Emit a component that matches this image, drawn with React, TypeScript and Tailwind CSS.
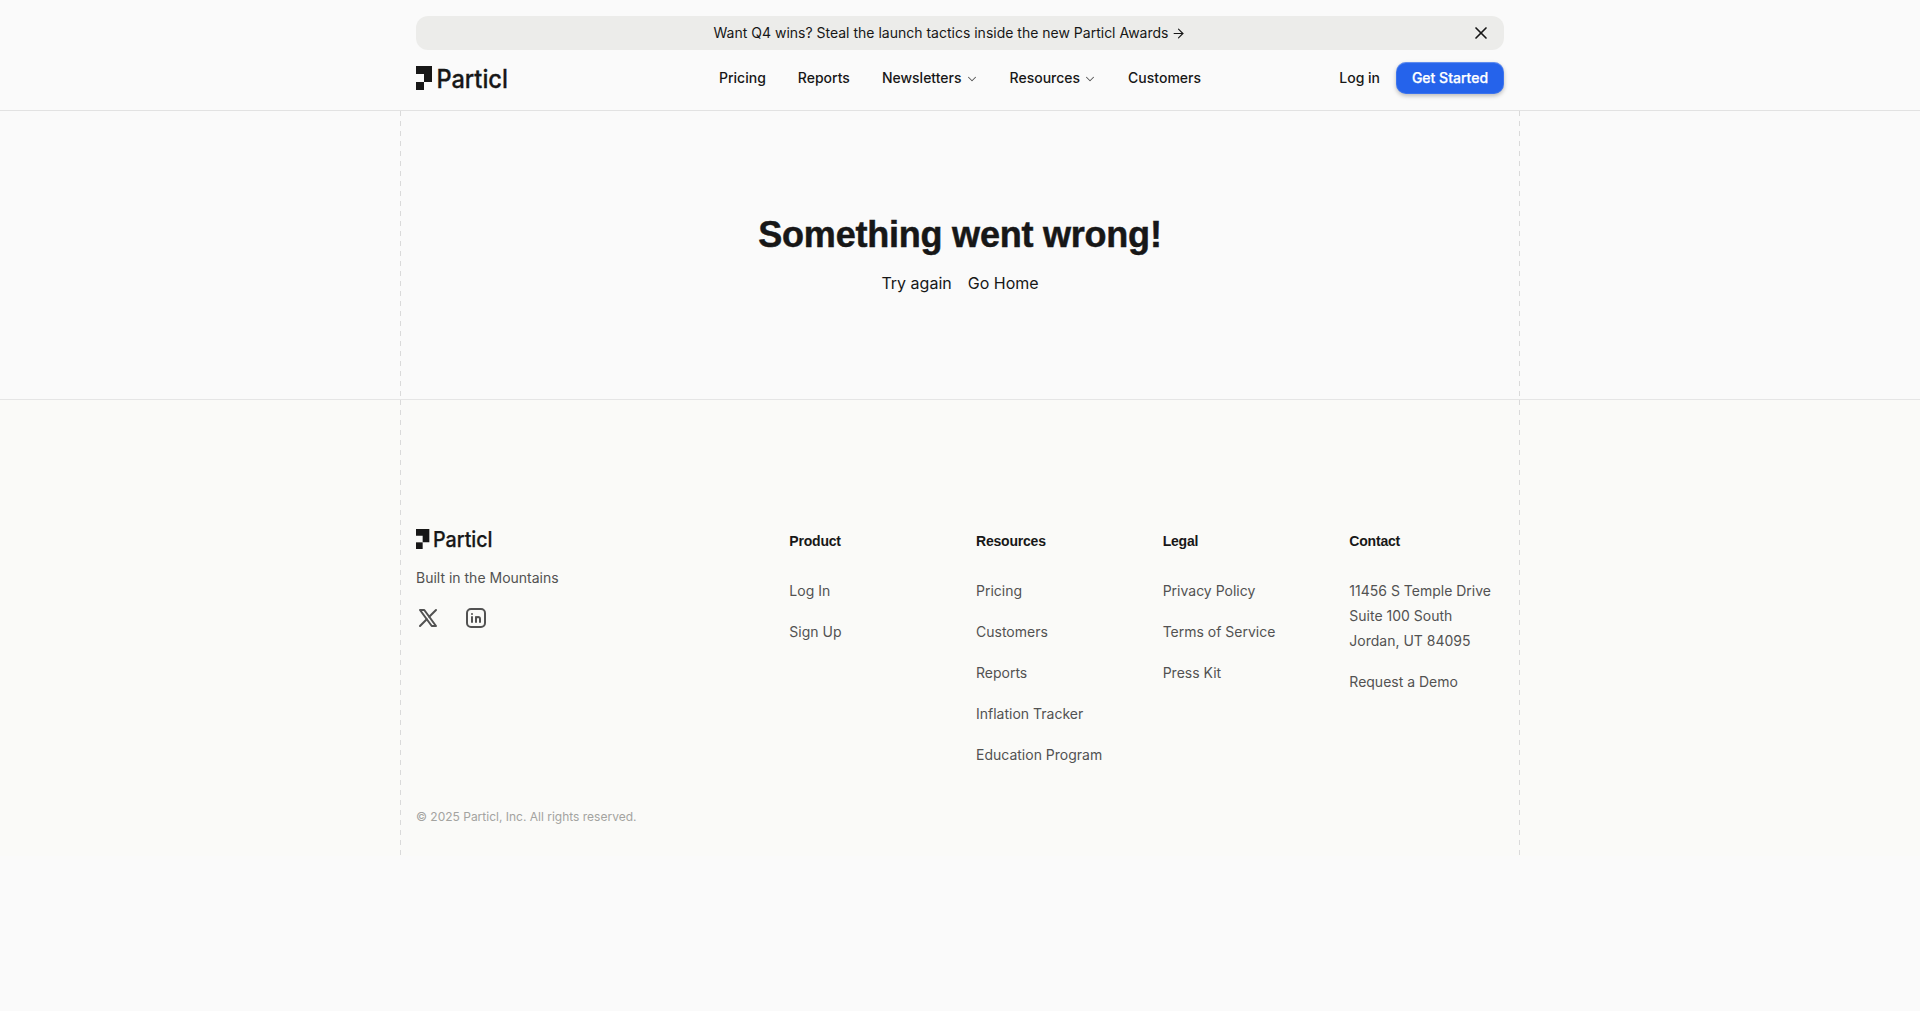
import React from "react";
import { ArrowRight, ChevronDown, X } from "lucide-react";

const navLinks = [
  { label: "Pricing" },
  { label: "Reports" },
  { label: "Newsletters", menu: true },
  { label: "Resources", menu: true },
  { label: "Customers" },
];

const footerColumns = [
  { title: "Product", links: ["Log In", "Sign Up"] },
  {
    title: "Resources",
    links: [
      "Pricing",
      "Customers",
      "Reports",
      "Inflation Tracker",
      "Education Program",
    ],
  },
  { title: "Legal", links: ["Privacy Policy", "Terms of Service", "Press Kit"] },
];

const Logo = ({ className }: { className?: string }) => (
  <svg
    viewBox="0 0 96 24"
    fill="#171717"
    overflow="visible"
    className={className}
  >
    <path d="M0 0h16v16H8V8H0z" />
    <path d="M0 16h8v8H0z" />
    <text
      x="20.4"
      y="21.8"
      fontSize="25"
      fontWeight="500"
      textLength="71.5"
      lengthAdjust="spacingAndGlyphs"
      stroke="#171717"
      strokeWidth="0.3"
      className="font-['Inter',sans-serif]"
    >
      Particl
    </text>
  </svg>
);

const iconProps = {
  width: 24,
  height: 24,
  viewBox: "0 0 24 24",
  fill: "none",
  stroke: "currentColor",
  strokeWidth: 2,
  strokeLinecap: "round" as const,
  strokeLinejoin: "round" as const,
};

const XLogo = () => (
  <svg {...iconProps}>
    <path d="M4 4l11.733 16h4.267l-11.733 -16z" />
    <path d="M4 20l6.768 -6.768m2.46 -2.46l6.772 -6.772" />
  </svg>
);

const LinkedinLogo = () => (
  <svg {...iconProps}>
    <path d="M8 11v5" />
    <path d="M8 8v.01" />
    <path d="M12 16v-5" />
    <path d="M16 16v-3a2 2 0 1 0 -4 0" />
    <path d="M3 7a4 4 0 0 1 4 -4h10a4 4 0 0 1 4 4v10a4 4 0 0 1 -4 4h-10a4 4 0 0 1 -4 -4z" />
  </svg>
);

const Rail = () => (
  <div className="w-px shrink-0 bg-[repeating-linear-gradient(to_bottom,#dadada_0px,#dadada_5px,transparent_5px,transparent_10px)]" />
);

// Content column with a dashed rail on both sides
const Railed = ({ children }: { children: React.ReactNode }) => (
  <div className="mx-auto flex w-[1120px]">
    <Rail />
    <div className="w-[1118px] px-[15px]">{children}</div>
    <Rail />
  </div>
);

const FooterTitle = ({ children }: { children: React.ReactNode }) => (
  <h3 className="pt-px font-['Liberation_Sans',sans-serif] font-bold tracking-[-0.2px] text-[#171717]">
    {children}
  </h3>
);

const Header = () => (
  <header className="border-b border-[#e2e2e2] pt-4 pb-4">
    <div className="mx-auto flex w-[1088px] flex-col gap-3">
      <div className="flex h-[34px] items-center rounded-xl bg-[#ececea] pr-[13px]">
        <a className="flex flex-1 items-center justify-center gap-[3px] pl-[13px] text-sm">
          Want Q4 wins? Steal the launch tactics inside the new Particl Awards
          <ArrowRight size={15} strokeWidth={1.75} />
        </a>
        <button>
          <X size={20} strokeWidth={2} />
        </button>
      </div>
      <div className="flex h-8 items-center justify-between text-sm font-medium">
        <div className="flex w-[303px]">
          <Logo className="h-6 w-24" />
        </div>
        <nav className="flex gap-8">
          {navLinks.map((link) => (
            <a key={link.label} className="flex items-center gap-[3px]">
              {link.label}
              {link.menu && (
                <ChevronDown
                  size={14}
                  strokeWidth={1.75}
                  className="mt-0.5 -mr-px text-[#555]"
                />
              )}
            </a>
          ))}
        </nav>
        <div className="flex w-[303px] items-center justify-end gap-4">
          <a>Log in</a>
          <button className="h-8 w-[108px] rounded-[10px] bg-[#2563eb] font-medium text-white shadow-[inset_0_0_0_1px_rgba(255,255,255,0.1),inset_0_1px_1px_rgba(255,255,255,0.2),0_2px_4px_rgba(0,0,0,0.25)] [-webkit-text-stroke:0.25px_white]">
            Get Started
          </button>
        </div>
      </div>
    </div>
  </header>
);

const Footer = () => (
  <footer className="border-t border-[#e5e5e5] bg-[#fafaf8]">
    <Railed>
      <div className="flex h-[456px] flex-col pt-[128px]">
        <div className="grid grid-cols-6 gap-x-8 text-sm leading-[25px] text-[#525252]">
          <div className="col-span-2 flex flex-col">
            <Logo className="mt-px h-5 w-20" />
            <p className="mt-4">Built in the Mountains</p>
            <div className="mt-4 flex gap-6">
              <XLogo />
              <LinkedinLogo />
            </div>
          </div>
          {footerColumns.map((column) => (
            <div key={column.title}>
              <FooterTitle>{column.title}</FooterTitle>
              <ul className="mt-6 flex flex-col gap-4">
                {column.links.map((link) => (
                  <li key={link}>{link}</li>
                ))}
              </ul>
            </div>
          ))}
          <div>
            <FooterTitle>Contact</FooterTitle>
            <address className="mt-6 whitespace-nowrap not-italic">
              11456 S Temple Drive
              <br />
              Suite 100 South
              <br />
              Jordan, UT 84095
            </address>
            <p className="mt-4">Request a Demo</p>
          </div>
        </div>
        <p className="mt-[42px] text-xs leading-4 text-[#a3a3a0]">
          © 2025 Particl, Inc. All rights reserved.
        </p>
      </div>
    </Railed>
  </footer>
);

const App = () => {
  return (
    <div className="min-h-screen bg-[#fafafa] font-['Inter',sans-serif] text-[#171717] antialiased">
      <Header />
      <main>
        <Railed>
          <div className="flex h-72 flex-col items-center pt-[104px]">
            <h1 className="font-['Liberation_Sans',sans-serif] text-4xl leading-10 font-bold tracking-[-0.22px] [-webkit-text-stroke:0.5px_#171717]">
              Something went wrong!
            </h1>
            <div className="mt-4 flex gap-4 leading-6">
              <button>Try again</button>
              <a>Go Home</a>
            </div>
          </div>
        </Railed>
      </main>
      <Footer />
    </div>
  );
};

export default App;
